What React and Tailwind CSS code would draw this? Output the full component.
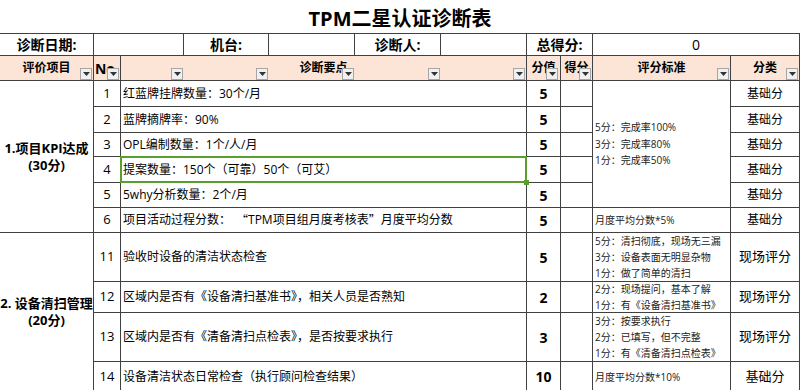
const line = "border-r border-b border-[#404040]";

function Dd({ className = "" }) {
  return (
    <div className={`absolute bottom-0 right-[1px] w-[12px] h-[12px] border border-[#a6a6a6] bg-[#f0f0f0] flex items-center justify-center ${className}`}>
      <svg width="7" height="4" viewBox="0 0 7 4">
        <path d="M0 0h7L3.5 4z" fill="#333" />
      </svg>
    </div>
  );
}

const kpiRows = [
  { no: 1, text: "红蓝牌挂牌数量：30个/月", score: 5 },
  { no: 2, text: "蓝牌摘牌率：90%", score: 5 },
  { no: 3, text: "OPL编制数量：1个/人/月", score: 5 },
  { no: 4, text: "提案数量：150个（可靠）50个（可艾）", score: 5, selected: true },
  { no: 5, text: "5why分析数量：2个/月", score: 5 },
];

const cleanRows = [
  {
    no: 11,
    text: "验收时设备的清洁状态检查",
    score: 5,
    crit: ["5分：清扫彻底，现场无三漏", "3分：设备表面无明显杂物", "1分：做了简单的清扫"],
    kind: "现场评分",
  },
  {
    no: 12,
    text: "区域内是否有《设备清扫基准书》，相关人员是否熟知",
    score: 2,
    crit: ["2分：现场提问，基本了解", "1分：有《设备清扫基准书》"],
    kind: "现场评分",
  },
  {
    no: 13,
    text: "区域内是否有《清备清扫点检表》，是否按要求执行",
    score: 3,
    crit: ["3分：按要求执行", "2分：已填写，但不完整", "1分：有《清备清扫点检表》"],
    kind: "现场评分",
  },
  {
    no: 14,
    text: "设备清洁状态日常检查（执行顾问检查结果）",
    score: 10,
    crit: ["月度平均分数*10%"],
    kind: "基础分",
  },
];

function RowCells({ no, text, score, selected }) {
  return (
    <>
      <div className={`${line} flex items-center justify-center text-[13px]`}>{no}</div>
      <div className={`${line} col-span-5 relative flex items-center pl-[2px] text-[12px] whitespace-nowrap`}>
        {text}
        {selected && (
          <>
            <div className="absolute top-[-1px] left-[-1px] right-[-1px] bottom-[-1px] border-2 border-[#5a9f2e] z-10"></div>
            <div className="absolute right-[-3px] bottom-[-3px] w-[5px] h-[5px] bg-[#5a9f2e] z-20"></div>
          </>
        )}
      </div>
      <div className={`${line} flex items-center justify-center text-[14px] font-bold`}>{score}</div>
      <div className={line}></div>
    </>
  );
}

export default function App() {
  return (
    <div className="w-[800px] h-[390px] overflow-hidden bg-white text-black font-['Open_Sans','Noto_Sans_CJK_SC',sans-serif]">
      <div className="h-[33px] flex justify-center pt-[7px]">
        <div className="text-[20px] leading-[24px] font-bold">TPM二星认证诊断表</div>
      </div>
      <div className="grid border-t border-[#404040] grid-cols-[94px_27px_63px_85px_86px_86px_86px_34px_32px_138px_69px] grid-rows-[22px_25px_26px_26px_24px_26px_25px_25px_49px_31px_49px_30px]">
        {/* info row */}
        <div className={`${line} flex items-center justify-center text-[14px] font-bold`}>诊断日期:</div>
        <div className={`${line} col-span-2`}></div>
        <div className={`${line} flex items-center justify-center text-[14px] font-bold`}>机台:</div>
        <div className={line}></div>
        <div className={`${line} flex items-center justify-center text-[14px] font-bold`}>诊断人:</div>
        <div className={line}></div>
        <div className={`${line} col-span-2 flex items-center justify-center text-[14px] font-bold`}>总得分:</div>
        <div className={`${line} col-span-2 flex items-center justify-center text-[14px]`}>0</div>

        {/* header row */}
        <div className={`${line} relative bg-[#fce4d6] flex items-center justify-center text-[12px] font-bold`}>
          评价项目
          <Dd />
        </div>
        <div className={`${line} relative bg-[#fce4d6] flex items-center justify-center text-[14px] font-bold`}>
          No.
          <Dd />
        </div>
        <div className={`${line} col-span-5 relative bg-[#fce4d6] flex items-center justify-center text-[12px] font-bold`}>
          诊断要点
          <div className="absolute inset-0 flex">
            <div className="relative w-[63px]"><Dd /></div>
            <div className="relative w-[85px]"><Dd /></div>
            <div className="relative w-[86px]"><Dd /></div>
            <div className="relative w-[86px]"><Dd /></div>
            <div className="relative w-[85px]"><Dd /></div>
          </div>
        </div>
        <div className={`${line} relative bg-[#fce4d6] flex items-center justify-center text-[12px] font-bold`}>
          分值
          <Dd className="right-[2px]" />
        </div>
        <div className={`${line} relative bg-[#fce4d6] flex items-center justify-center text-[12px] font-bold`}>
          得分
          <Dd />
        </div>
        <div className={`${line} relative bg-[#fce4d6] flex items-center justify-center text-[12px] font-bold`}>
          评分标准
          <Dd />
        </div>
        <div className={`${line} relative bg-[#fce4d6] flex items-center justify-center text-[12px] font-bold`}>
          分类
          <Dd />
        </div>

        {/* section 1 */}
        <div className={`${line} row-span-6 flex flex-col items-center justify-center text-[13px] font-bold leading-[17px]`}>
          <div>1.项目KPI达成</div>
          <div>(30分)</div>
        </div>
        {kpiRows.flatMap((r, i) => {
          const out = [<RowCells key={r.no} {...r} />];
          if (i === 0) {
            out.push(
              <div key="crit" className={`${line} row-span-5 flex flex-col justify-center pl-[2px] text-[10px] leading-[16.5px] text-[#222]`}>
                <div>5分：完成率100%</div>
                <div>3分：完成率80%</div>
                <div>1分：完成率50%</div>
              </div>
            );
          }
          out.push(
            <div key={`k${i}`} className={`${line} flex items-center justify-center text-[12px]`}>基础分</div>
          );
          return out;
        })}
        <RowCells
          no={6}
          text={
            <>
              项目活动过程分数：
              <span className="font-['Noto_Sans_CJK_SC',sans-serif] pl-[5px]">“</span>
              TPM项目组月度考核表
              <span className="font-['Noto_Sans_CJK_SC',sans-serif]">”</span>
              月度平均分数
            </>
          }
          score={5}
        />
        <div className={`${line} flex items-center pl-[2px] text-[10px] text-[#222]`}>月度平均分数*5%</div>
        <div className={`${line} flex items-center justify-center text-[12px]`}>基础分</div>

        {/* section 2 */}
        <div className={`${line} row-span-4 flex flex-col items-center justify-center text-[13px] font-bold leading-[17px]`}>
          <div>2. 设备清扫管理</div>
          <div>(20分)</div>
        </div>
        {cleanRows.map((r) => [
          <RowCells key={`r${r.no}`} no={r.no} text={r.text} score={r.score} />,
          <div key={`c${r.no}`} className={`${line} flex flex-col justify-center pl-[2px] text-[10px] leading-[16px] text-[#222] whitespace-nowrap`}>
            {r.crit.map((c) => (
              <div key={c}>{c}</div>
            ))}
          </div>,
          <div key={`k${r.no}`} className={`${line} flex items-center justify-center text-[13px]`}>{r.kind}</div>,
        ])}
      </div>
    </div>
  );
}
